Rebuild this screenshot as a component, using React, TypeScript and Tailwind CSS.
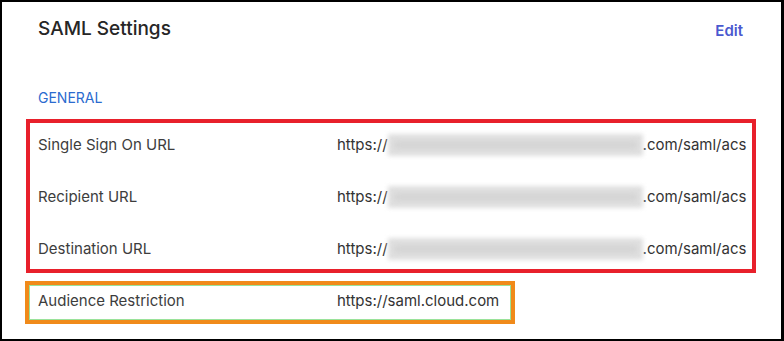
import React from "react";

type Row = { label: string; value: React.ReactNode };

function Blurred() {
  // obscured hostname in the screenshot
  return (
    <span className="relative inline-block w-[255px] h-[22px] align-middle">
      <span className="absolute inset-0 bg-[#e0e0e0] blur-[2px]" />
      <span className="absolute left-[6px] right-[6px] top-[8px] h-[6px] bg-[#d0d0d0] blur-[3px]" />
    </span>
  );
}

function MaskedUrl() {
  return (
    <span className="flex items-center">
      <span>https://</span>
      <Blurred />
      <span>.com/saml/acs</span>
    </span>
  );
}

const general: Row[] = [
  { label: "Single Sign On URL", value: <MaskedUrl /> },
  { label: "Recipient URL", value: <MaskedUrl /> },
  { label: "Destination URL", value: <MaskedUrl /> },
];

function SettingRow({ label, value, className }: Row & { className?: string }) {
  return (
    <div className={"flex items-center pl-2 text-[15px] text-[#3d3d3d] " + (className ?? "h-10")}>
      <div className="w-[299px] shrink-0">{label}</div>
      <div className="text-[#333333]">{value}</div>
    </div>
  );
}

export default function App() {
  return (
    <div className="w-[784px] h-[341px] border-2 border-r-[3px] border-black bg-white pl-[23px] pr-[25px] font-['Inter','Noto_Sans',sans-serif] leading-5">
      {/* Header */}
      <div className="flex items-start justify-between pt-[13px] px-[13px]">
        <h1 className="text-[19px] leading-7 font-medium text-[#262626]">SAML Settings</h1>
        <button className="mt-[6px] text-[15px] font-semibold text-[#4a59cf]">Edit</button>
      </div>

      <div className="mt-[45px] pl-[13px] text-[14px] text-[#2b6bcf]">GENERAL</div>

      {/* highlighted group */}
      <div className="mt-[11px] ml-px border-4 border-[#e8202b] pt-[2px] flex flex-col gap-3">
        {general.map((r) => (
          <SettingRow key={r.label} label={r.label} value={r.value} />
        ))}
      </div>

      <div className="mt-2 w-[490px] border-4 border-[#f08a1a]">
        <div className="border border-[#9ae29a]">
          <SettingRow
            label="Audience Restriction"
            value="https://saml.cloud.com"
            className="h-[33px] pb-1"
          />
        </div>
      </div>
    </div>
  );
}
